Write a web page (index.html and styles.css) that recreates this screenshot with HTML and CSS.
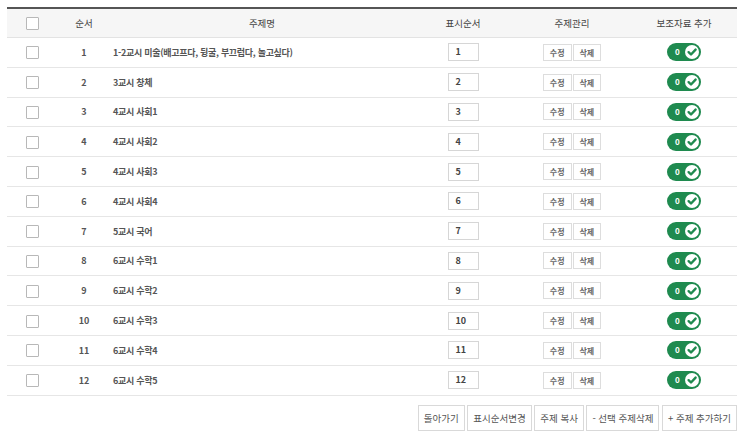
FILE: index.html
```html
<!DOCTYPE html>
<html lang="ko">
<head>
<meta charset="utf-8">
<link rel="stylesheet" href="styles.css">
</head>
<body>
<div class="wrap">
<table class="list">
  <colgroup>
    <col class="c-chk"><col class="c-no"><col class="c-title"><col class="c-ord"><col class="c-mng"><col class="c-add">
  </colgroup>
  <thead>
    <tr>
      <th><span class="chk"></span></th>
      <th>순서</th>
      <th>주제명</th>
      <th>표시순서</th>
      <th>주제관리</th>
      <th>보조자료 추가</th>
    </tr>
  </thead>
  <tbody id="rows"></tbody>
</table>
<div class="actions">
  <button class="btn">돌아가기</button>
  <button class="btn">표시순서변경</button>
  <button class="btn">주제 복사</button>
  <button class="btn">- 선택 주제삭제</button>
  <button class="btn">+ 주제 추가하기</button>
</div>
</div>
<script src="app.js"></script>
</body>
</html>
```

FILE: app.js
```js
var titles = ["1-2교시 미술(배고프다, 뒹굴, 부끄럽다, 놀고싶다)","3교시 창체","4교시 사회1","4교시 사회2","4교시 사회3","4교시 사회4","5교시 국어","6교시 수학1","6교시 수학2","6교시 수학3","6교시 수학4","6교시 수학5"];
var html = "";
for (var i = 0; i < titles.length; i++) {
  var n = i + 1;
  html += '<tr>' +
    '<td><span class="chk"></span></td>' +
    '<td class="no">' + n + '</td>' +
    '<td class="title">' + titles[i] + '</td>' +
    '<td><span class="ord">' + n + '</span></td>' +
    '<td><span class="mini">수정</span><span class="mini">삭제</span></td>' +
    '<td><span class="toggle"><span class="cnt">0</span><span class="knob"><svg viewBox="0 0 14 14" width="14" height="14"><path d="M3.6 7.2 L6 9.5 L10.6 4.6" fill="none" stroke="#1f8a4f" stroke-width="2.4" stroke-linecap="round" stroke-linejoin="round"/></svg></span></span></td>' +
    '</tr>';
}
document.getElementById("rows").innerHTML = html;
```

FILE: styles.css
```css
html, body {
  margin: 0;
  padding: 0;
  background: #fff;
}
body {
  font-family: "Noto Sans CJK KR", "Noto Sans", sans-serif;
  color: #555;
}
.wrap {
  padding: 7px 6px 0 7px;
}
.list {
  width: 730px;
  border-collapse: collapse;
  table-layout: fixed;
  border-top: 2px solid #555;
}
.c-chk { width: 50px; }
.c-no { width: 54px; }
.c-title { width: 302px; }
.c-ord { width: 100px; }
.c-mng { width: 118px; }
.c-add { width: 106px; }
.list th {
  height: 28px;
  background: #f6f6f6;
  font-size: 9.5px;
  font-weight: 400;
  color: #444;
  text-align: center;
  border-bottom: 1px solid #e3e3e3;
  padding: 0;
}
.list td {
  height: 28.8px;
  padding: 0;
  text-align: center;
  border-bottom: 1px solid #e6e6e6;
  font-size: 9px;
  font-weight: 700;
  color: #555;
  vertical-align: middle;
}
.list td.title {
  text-align: left;
  padding-left: 2px;
  letter-spacing: -0.3px;
}
.chk {
  display: inline-block;
  width: 11px;
  height: 11px;
  border: 1px solid #b8b8b8;
  border-radius: 1px;
  background: #fff;
  vertical-align: middle;
}
.ord {
  display: inline-block;
  box-sizing: border-box;
  width: 31px;
  height: 18px;
  line-height: 16px;
  border: 1px solid #d6d6d6;
  text-align: left;
  padding-left: 7px;
  font-size: 9px;
  font-weight: 700;
  color: #444;
  vertical-align: middle;
}
.mini {
  display: inline-block;
  box-sizing: border-box;
  height: 17px;
  line-height: 15px;
  padding: 0 6px;
  border: 1px solid #ddd;
  font-size: 8px;
  font-weight: 700;
  color: #666;
  margin: 0 0.5px;
  vertical-align: middle;
}
.toggle {
  display: inline-flex;
  align-items: center;
  justify-content: space-between;
  box-sizing: border-box;
  width: 34px;
  height: 18px;
  border-radius: 9px;
  background: #1f8a4f;
  padding: 0 2px 0 8px;
  vertical-align: middle;
}
.cnt {
  color: #fff;
  font-size: 8px;
  font-weight: 700;
  line-height: 1;
}
.knob {
  display: inline-flex;
  width: 14px;
  height: 14px;
  border-radius: 50%;
  background: #fff;
}
.actions {
  display: flex;
  justify-content: flex-end;
  gap: 2.5px;
  margin-top: 9px;
}
.btn {
  box-sizing: border-box;
  height: 26px;
  padding: 0 5px;
  border: 1px solid #d9d9d9;
  background: #fff;
  font-family: "Noto Sans CJK KR", "Noto Sans", sans-serif;
  font-size: 9.5px;
  color: #555;
  cursor: pointer;
}
```
